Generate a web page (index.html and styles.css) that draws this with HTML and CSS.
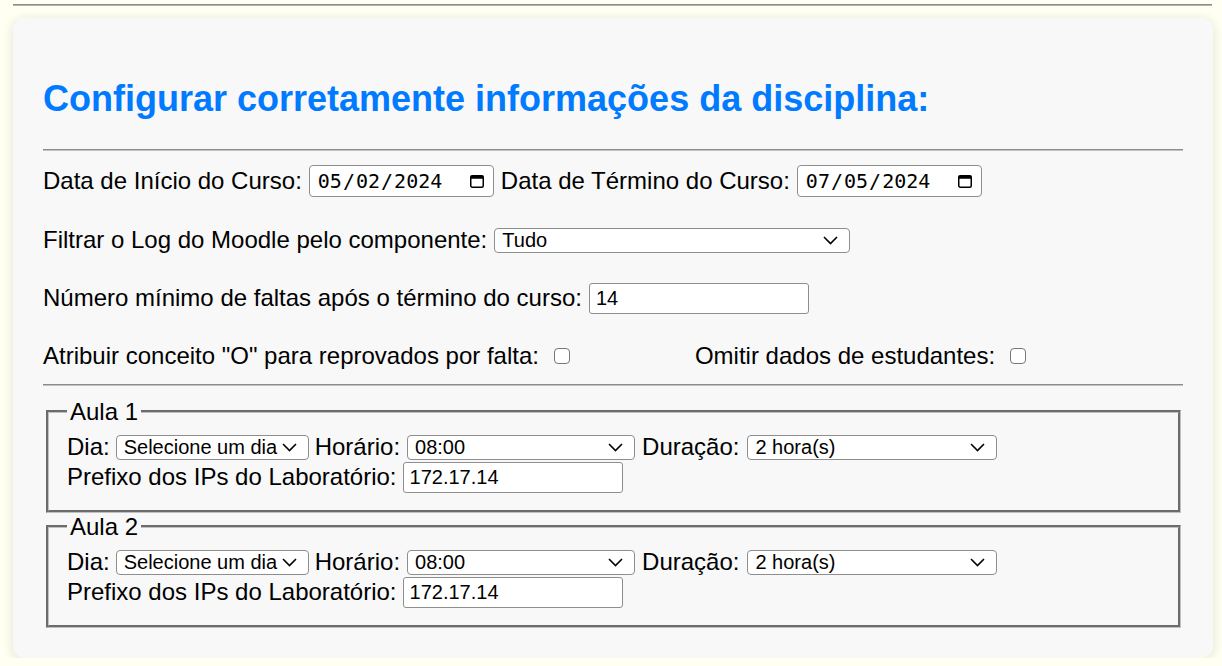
FILE: index.html
```html
<!DOCTYPE html>
<html lang="pt-BR">
<head>
<meta charset="utf-8">
<title>Configurar disciplina</title>
<link rel="stylesheet" href="styles.css">
</head>
<body>
<div class="page">
  <hr class="top-rule">
  <section class="card">
    <h2 class="title">Configurar corretamente informações da disciplina:</h2>
    <hr class="rule">
    <div class="form">
      <div class="row row-date">
        <label for="inicio">Data de Início do Curso:</label>
        <input class="date" type="date" id="inicio" value="2024-05-02">
        <label for="termino">Data de Término do Curso:</label>
        <input class="date" type="date" id="termino" value="2024-07-05">
      </div>
      <div class="row row-select">
        <label for="componente">Filtrar o Log do Moodle pelo componente:</label>
        <select class="select sel-tudo" id="componente">
          <option>Tudo</option>
        </select>
      </div>
      <div class="row row-text">
        <label for="faltas">Número mínimo de faltas após o término do curso:</label>
        <input class="text" type="text" id="faltas" value="14">
      </div>
      <div class="row row-check">
        <label for="conceito">Atribuir conceito "O" para reprovados por falta:</label>
        <input class="check" type="checkbox" id="conceito">
        <label class="label-omit" for="omitir">Omitir dados de estudantes:</label>
        <input class="check" type="checkbox" id="omitir">
      </div>
    </div>
    <hr class="rule rule-mid">
    <fieldset class="aula">
      <legend>Aula 1</legend>
      <div class="aula-row">
        <label for="dia1">Dia:</label>
        <select class="select sel-dia" id="dia1"><option>Selecione um dia</option></select>
        <label for="hora1">Horário:</label>
        <select class="select sel-hora" id="hora1"><option>08:00</option></select>
        <label class="label-dur" for="dur1">Duração:</label>
        <select class="select sel-dur" id="dur1"><option>2 hora(s)</option></select>
      </div>
      <div class="aula-row aula-row-ip">
        <label for="ip1">Prefixo dos IPs do Laboratório:</label>
        <input class="text" type="text" id="ip1" value="172.17.14">
      </div>
    </fieldset>
    <fieldset class="aula">
      <legend>Aula 2</legend>
      <div class="aula-row">
        <label for="dia2">Dia:</label>
        <select class="select sel-dia" id="dia2"><option>Selecione um dia</option></select>
        <label for="hora2">Horário:</label>
        <select class="select sel-hora" id="hora2"><option>08:00</option></select>
        <label class="label-dur" for="dur2">Duração:</label>
        <select class="select sel-dur" id="dur2"><option>2 hora(s)</option></select>
      </div>
      <div class="aula-row aula-row-ip">
        <label for="ip2">Prefixo dos IPs do Laboratório:</label>
        <input class="text" type="text" id="ip2" value="172.17.14">
      </div>
    </fieldset>
  </section>
</div>
</body>
</html>
```

FILE: styles.css
```css
html, body {
  margin: 0;
  padding: 0;
  background: #fffff2;
}

body {
  font-family: "Liberation Sans", Arial, Helvetica, sans-serif;
  font-size: 24px;
  color: #000;
}

.page {
  width: 1200px;
  padding: 0 0 0 13px;
}

.top-rule {
  margin: 4px 1px 12px 0;
  height: 0;
  border: 0;
  border-top: 1px solid #8c8c8c;
  border-bottom: 1px solid #b4b4b4;
}

.card {
  background: #f8f8f8;
  border-radius: 12px;
  box-shadow: 0 2px 12px rgba(60, 60, 30, 0.14);
  padding: 30px;
}

.title {
  margin: 30px 0;
  font-size: 36px;
  font-weight: bold;
  line-height: 41px;
  color: #007bff;
}

.rule {
  margin: 0 0 12px 0;
  height: 0;
  border: 0;
  border-top: 1px solid #8c8c8c;
  border-bottom: 1px solid #c2c2c2;
}

.rule-mid {
  margin-top: 14px;
}

.form {
  display: flex;
  flex-direction: column;
  gap: 27px;
}

.row {
  display: flex;
  align-items: center;
  gap: 7px;
  white-space: nowrap;
}

.row-date { height: 36px; }
.row-select { height: 28px; }
.row-text { height: 34px; }
.row-check { height: 28px; }

.date {
  box-sizing: border-box;
  width: 185px;
  height: 32px;
  margin: 0;
  padding: 0 6px 0 7px;
  border: 1px solid #8e8e8e;
  border-radius: 4px;
  background: #fff;
  font-family: "DejaVu Sans Mono", "Liberation Mono", monospace;
  font-size: 20px;
  color: #000;
}

.date::-webkit-datetime-edit {
  padding: 0;
}

.date::-webkit-calendar-picker-indicator {
  width: 16px;
  height: 16px;
  padding: 0;
  margin: 0 2px 0 0;
  background: url("data:image/svg+xml;utf8,<svg xmlns='http://www.w3.org/2000/svg' width='16' height='16' viewBox='0 0 16 16'><rect x='1.75' y='2.75' width='12.5' height='11.5' rx='1.5' fill='none' stroke='black' stroke-width='1.5'/><rect x='1.75' y='2.75' width='12.5' height='3' fill='black'/></svg>") no-repeat center / 16px 16px;
  opacity: 1;
}

.select {
  -webkit-appearance: none;
  appearance: none;
  box-sizing: border-box;
  height: 25px;
  margin: 0;
  padding: 0 28px 0 7px;
  border: 1px solid #8e8e8e;
  border-radius: 4px;
  background: #fff url("data:image/svg+xml;utf8,<svg xmlns='http://www.w3.org/2000/svg' width='15' height='9' viewBox='0 0 15 9'><polyline points='1,1 7.5,7.5 14,1' fill='none' stroke='black' stroke-width='1.6'/></svg>") no-repeat right 11px center;
  font-family: "Liberation Sans", Arial, Helvetica, sans-serif;
  font-size: 20px;
  color: #000;
}

.sel-tudo { width: 356px; }
.sel-dia { width: 193px; }
.sel-hora { width: 228px; margin-left: 1px; }
.sel-dur { width: 250px; margin-left: 2px; }
.label-dur { margin-left: 1px; }

.text {
  box-sizing: border-box;
  width: 220px;
  height: 31px;
  margin: 0;
  padding: 0 6px;
  border: 1px solid #8e8e8e;
  border-radius: 3px;
  background: #fff;
  font-family: "Liberation Sans", Arial, Helvetica, sans-serif;
  font-size: 20px;
  color: #000;
}

.check {
  -webkit-appearance: none;
  appearance: none;
  box-sizing: border-box;
  flex: 0 0 16px;
  width: 16px;
  min-width: 16px;
  height: 16px;
  margin: 0 0 0 8px;
  border: 1.5px solid #777;
  border-radius: 4px;
  background: #fff;
}

.label-omit {
  margin-left: 118px;
}

.aula {
  margin: 0 2px 0 3px;
  padding: 8px 18px 17px;
  border: 3px groove #c0c0c0;
}

.aula legend {
  padding: 0 3px;
  line-height: 27px;
}

.aula-row {
  display: flex;
  align-items: center;
  gap: 6px;
  height: 28px;
  white-space: nowrap;
}

.aula-row-ip {
  height: 32px;
}
```
